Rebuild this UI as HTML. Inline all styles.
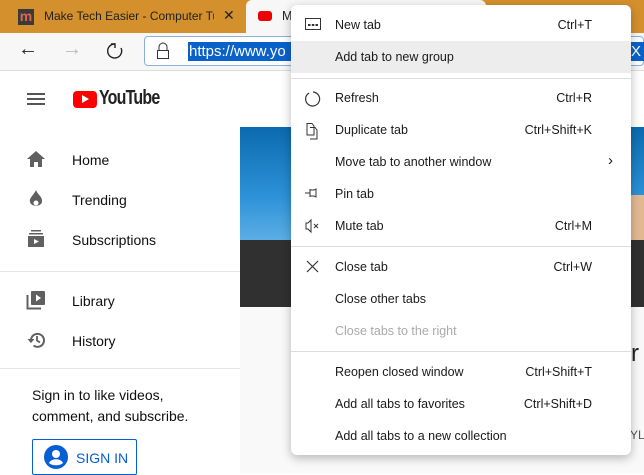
<!DOCTYPE html>
<html><head><style>
*{margin:0;padding:0;box-sizing:border-box}
body{width:644px;height:473px;overflow:hidden;position:relative;background:#fff;font-family:"Liberation Sans",sans-serif;color:#222}
.a{position:absolute}
.mi{position:absolute;left:291px;width:340px;height:32px;font-size:12.5px;color:#1a1a1a}
.mi .t{position:absolute;left:44px;top:9px}
.mi .s{position:absolute;right:39px;top:9px}
.mi svg{position:absolute;left:13px;top:8px}
.sep{position:absolute;left:291px;width:340px;height:1px;background:#ddd}
.yt{position:absolute;left:72px;font-size:14px;color:#0f0f0f}
.yi{position:absolute;left:26px}
</style></head><body>
<div class="a" style="left:0;top:0;width:644px;height:33px;background:#d4902d"></div>
<div class="a" style="left:246px;top:0;width:240px;height:33px;background:#f7f7f7;border-radius:6px 6px 0 0"></div>
<div class="a" style="left:18px;top:9px;width:16px;height:16px;background:#3a3a3a;color:#e0664a;font-weight:bold;font-size:14px;line-height:15px;text-align:center">m</div>
<div class="a" style="left:44px;top:9px;font-size:12px;color:#222;width:170px;white-space:nowrap;overflow:hidden">Make Tech Easier - Computer Tutorials</div>
<div class="a" style="left:223px;top:7px;font-size:14px">✕</div>
<div class="a" style="left:258px;top:11px;width:14px;height:10px;background:#e00;border-radius:3px"></div>
<div class="a" style="left:282px;top:9px;font-size:12.5px">M</div>
<div class="a" style="left:0;top:33px;width:644px;height:38px;background:#f7f7f7;border-bottom:1px solid #ddd"></div>
<div class="a" style="left:18px;top:38px;font-size:20px;color:#222">←</div>
<div class="a" style="left:62px;top:38px;font-size:20px;color:#bbb">→</div>
<svg class="a" style="left:106px;top:42px" width="18" height="18" viewBox="0 0 18 18"><path d="M9 2 A7 7 0 1 0 15 6" fill="none" stroke="#222" stroke-width="1.4"/><path d="M5 2 L9 2 L9 6" fill="none" stroke="#222" stroke-width="1.4"/></svg>
<div class="a" style="left:144px;top:36px;width:500px;height:30px;border:1px solid #8ab0d8;border-radius:4px;background:#fff"></div>
<svg class="a" style="left:156px;top:42px" width="14" height="18"><path d="M3 8V5a4 4 0 0 1 8 0v3" fill="none" stroke="#333"/><rect x="1.5" y="8.5" width="11" height="8" fill="none" stroke="#333"/></svg>
<div class="a" style="left:188px;top:42px;height:19px;width:456px;background:#0a62c9;color:#fff;font-size:15px;line-height:19px;padding-left:1px">https://www.yo</div>
<div class="a" style="left:631px;top:42px;color:#fff;font-size:15px;line-height:19px">X</div>
<div class="a" style="left:27px;top:93px;width:18px;height:2px;background:#555;box-shadow:0 5px 0 #555,0 10px 0 #555"></div>
<div class="a" style="left:73px;top:91px;width:24px;height:17px;background:#f00;border-radius:4px"></div>
<div class="a" style="left:82px;top:95px;width:0;height:0;border-left:7px solid #fff;border-top:4.5px solid transparent;border-bottom:4.5px solid transparent"></div>
<div class="a" style="left:99px;top:87px;font-size:20px;font-weight:bold;letter-spacing:-1px;color:#222;transform:scaleX(.8);transform-origin:left">YouTube</div>
<svg class="yi" style="top:150px" width="20" height="18"><path d="M10 1 L19 9 H16 V17 H12 V12 H8 V17 H4 V9 H1Z" fill="#606060"/></svg>
<div class="yt" style="top:152px">Home</div>
<svg class="yi" style="top:189px;left:28px" width="16" height="20"><path d="M8 1 C9 5 15 8 14 13 C13 18 3 18 2 13 C1 9 5 7 8 1Z" fill="#606060"/><circle cx="8" cy="14" r="2.5" fill="#fff"/></svg>
<div class="yt" style="top:192px">Trending</div>
<svg class="yi" style="top:229px;left:27px" width="18" height="20"><rect x="4" y="1" width="10" height="1.5" fill="#606060"/><rect x="2" y="4" width="14" height="1.5" fill="#606060"/><rect x="1" y="7" width="16" height="11" fill="#606060"/><path d="M7 10 L12 12.5 L7 15Z" fill="#fff"/></svg>
<div class="yt" style="top:232px">Subscriptions</div>
<div class="a" style="left:0;top:271px;width:240px;height:1px;background:#e5e5e5"></div>
<svg class="yi" style="top:290px" width="20" height="20"><rect x="5" y="1" width="14" height="14" rx="1" fill="#606060"/><path d="M10 4.5 L15 8 L10 11.5Z" fill="#fff"/><path d="M1.5 5 V18.5 H15" fill="none" stroke="#606060" stroke-width="2"/></svg>
<div class="yt" style="top:293px">Library</div>
<svg class="yi" style="top:330px" width="20" height="20"><path d="M5 10 A6.5 6.5 0 1 1 7.5 15.5" fill="none" stroke="#606060" stroke-width="2"/><path d="M1.5 9 L5 13 L8.5 9Z" fill="#606060"/><path d="M11 6 V10.5 L14 12.5" fill="none" stroke="#606060" stroke-width="1.8"/></svg>
<div class="yt" style="top:333px">History</div>
<div class="a" style="left:0;top:368px;width:240px;height:1px;background:#e5e5e5"></div>
<div class="a" style="left:32px;top:385px;font-size:14px;line-height:21px;color:#0f0f0f">Sign in to like videos,<br>comment, and subscribe.</div>
<div class="a" style="left:32px;top:439px;width:105px;height:36px;border:1px solid #065fd4;border-radius:2px"></div>
<svg class="a" style="left:44px;top:445px" width="24" height="24"><circle cx="12" cy="12" r="12" fill="#065fd4"/><circle cx="12" cy="9" r="4" fill="#fff"/><path d="M5 18 C7 13 17 13 19 18 C16 21 8 21 5 18Z" fill="#fff"/></svg>
<div class="a" style="left:76px;top:450px;font-size:14px;color:#065fd4;font-weight:500">SIGN IN</div>
<div class="a" style="left:240px;top:127px;width:404px;height:116px;background:linear-gradient(#0b6aae,#2d92d8 60%,#5fb0e6)"></div>
<div class="a" style="left:620px;top:195px;width:24px;height:48px;background:#e3b992"></div>
<div class="a" style="left:240px;top:240px;width:404px;height:67px;background:#303030"></div>
<div class="a" style="left:240px;top:307px;width:404px;height:166px;background:#f9f9f9"></div>
<div class="a" style="left:631px;top:340px;font-size:24px">r</div>
<div class="a" style="left:630px;top:428px;font-size:12px;color:#555">YL</div>
<div class="a" style="left:291px;top:5px;width:340px;height:450px;background:#fff;border-radius:6px;box-shadow:0 3px 10px rgba(0,0,0,.28)"></div>
<div class="mi" style="top:9px"><svg width="18" height="14"><rect x="1.5" y="1.5" width="15" height="11" fill="none" stroke="#333"/><rect x="4" y="7" width="2.5" height="2" fill="#333"/><rect x="7.8" y="7" width="2.5" height="2" fill="#333"/><rect x="11.5" y="7" width="2.5" height="2" fill="#333"/></svg><span class="t">New tab</span><span class="s">Ctrl+T</span></div>
<div class="mi" style="top:41px;background:#ededed"><span class="t">Add tab to new group</span></div>
<div class="sep" style="top:78px"></div>
<div class="mi" style="top:82px"><svg width="18" height="18"><path d="M5 3 A7 7 0 1 0 9 2" fill="none" stroke="#333" stroke-width="1.2"/></svg><span class="t">Refresh</span><span class="s">Ctrl+R</span></div>
<div class="mi" style="top:114px"><svg width="18" height="18"><path d="M3 1.5H8L10 4V13H3Z M6 5.5H11L13 8V17H6" fill="#fff" stroke="#333"/></svg><span class="t">Duplicate tab</span><span class="s">Ctrl+Shift+K</span></div>
<div class="mi" style="top:146px"><span class="t">Move tab to another window</span><span class="s" style="right:18px;top:6px;font-size:15px">›</span></div>
<div class="mi" style="top:178px"><svg width="18" height="14"><path d="M1 7H6 M6 3V11 M6 4H10L12 3V11L10 10H6" fill="none" stroke="#333"/></svg><span class="t">Pin tab</span></div>
<div class="mi" style="top:210px"><svg width="18" height="16"><path d="M2 5H4L7 2V14L4 11H2Z" fill="none" stroke="#333"/><path d="M10 6L14 10M14 6L10 10" stroke="#333"/></svg><span class="t">Mute tab</span><span class="s">Ctrl+M</span></div>
<div class="sep" style="top:246px"></div>
<div class="mi" style="top:251px"><svg width="18" height="16"><path d="M3 2L14 13M14 2L3 13" stroke="#333" stroke-width="1.2"/></svg><span class="t">Close tab</span><span class="s">Ctrl+W</span></div>
<div class="mi" style="top:283px"><span class="t">Close other tabs</span></div>
<div class="mi" style="top:315px;color:#aaa"><span class="t">Close tabs to the right</span></div>
<div class="sep" style="top:351px"></div>
<div class="mi" style="top:356px"><span class="t">Reopen closed window</span><span class="s">Ctrl+Shift+T</span></div>
<div class="mi" style="top:388px"><span class="t">Add all tabs to favorites</span><span class="s">Ctrl+Shift+D</span></div>
<div class="mi" style="top:420px"><span class="t">Add all tabs to a new collection</span></div>
</body></html>
